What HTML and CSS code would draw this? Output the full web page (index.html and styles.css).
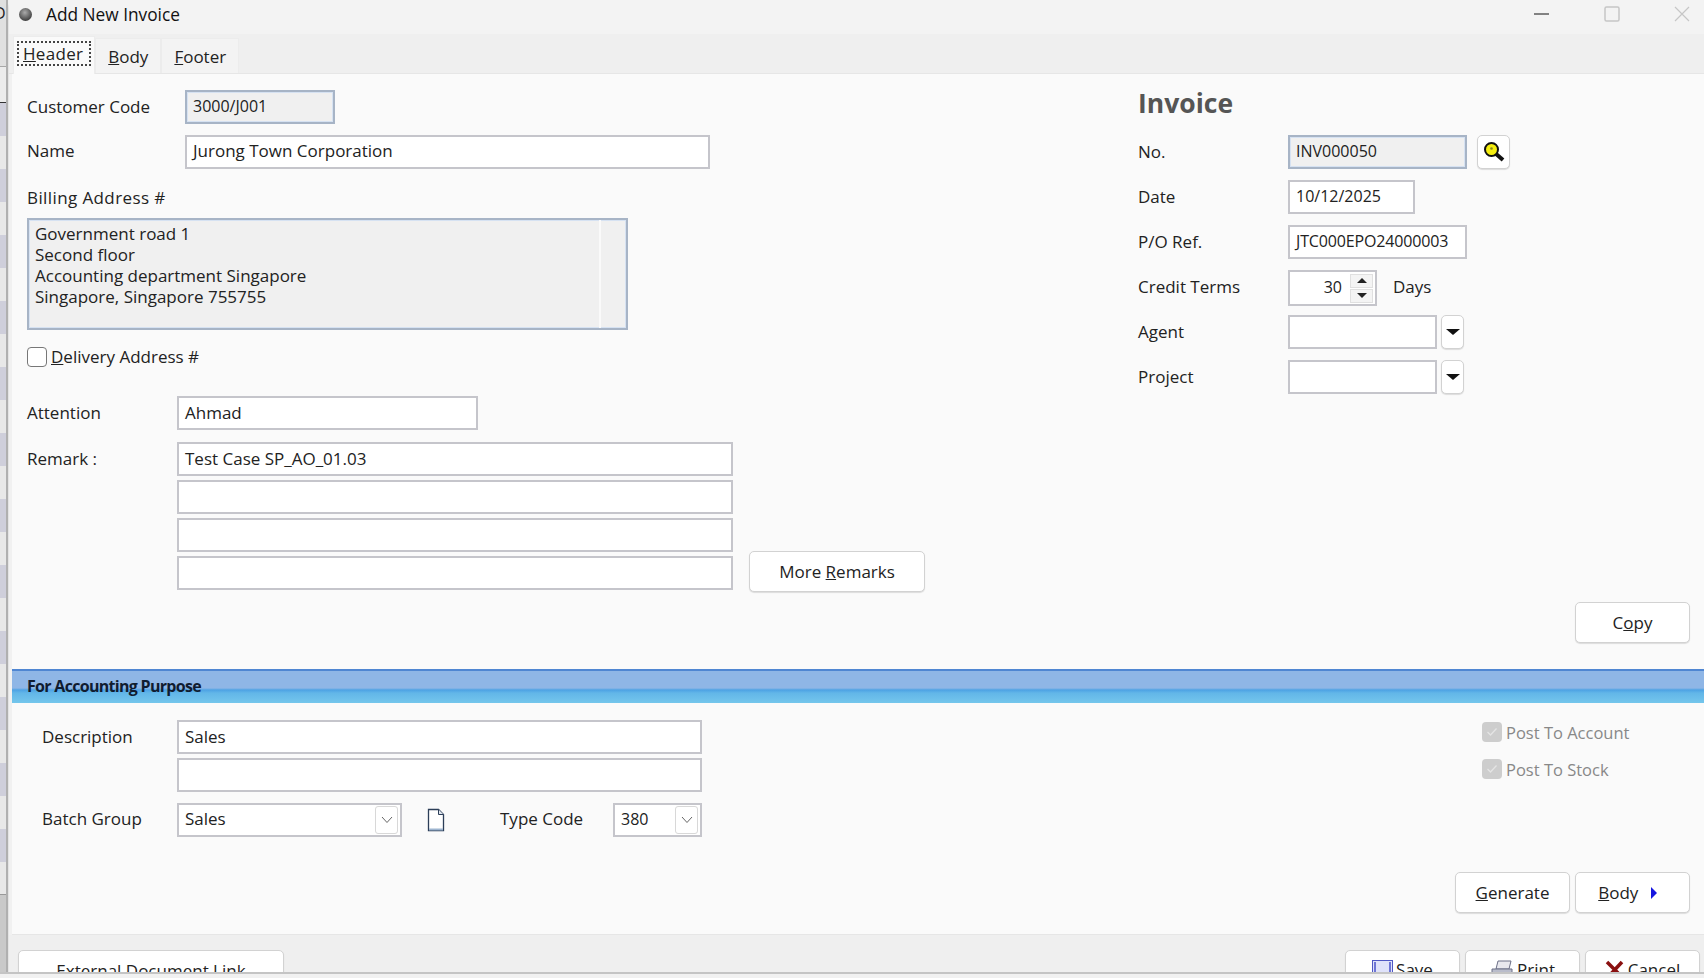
FILE: index.html

```html
<!DOCTYPE html>
<html lang="en">
<head>
    <meta charset="UTF-8">
    <title>Add New Invoice</title>
    <link rel="stylesheet" href="styles.css">
</head>
<body>
<div class="screen">
    <div class="behind">
        <div class="behind-head"><span class="behind-letter">D</span></div>
        <div class="behind-rows"></div>
        <div class="behind-foot"></div>
    </div>
    <div class="window">
        <div class="titlebar">
            <span class="app-dot"></span>
            <span class="title">Add New Invoice</span>
            <div class="win-btns">
                <svg width="16" height="16" viewBox="0 0 16 16"><path d="M0 8h15" stroke="#111" stroke-width="1" fill="none"/></svg>
                <svg width="16" height="16" viewBox="0 0 16 16"><rect x="1" y="1" width="14" height="14" rx="1.5" stroke="#c6c6c6" stroke-width="1.5" fill="none"/></svg>
                <svg width="16" height="16" viewBox="0 0 16 16"><path d="M1 1l14 14M15 1L1 15" stroke="#c6c6c6" stroke-width="1.2" fill="none"/></svg>
            </div>
        </div>

        <div class="tabs">
            <div class="tab active"><span class="focus-box"><u>H</u>eader</span></div>
            <div class="tab"><u>B</u>ody</div>
            <div class="tab"><u>F</u>ooter</div>
        </div>

        <div class="panel">
            <div class="top-area">
                <div class="left-col">
                    <div class="row row-code">
                        <label class="lbl">Customer Code</label>
                        <div class="field readonly w-code code-text">3000/J001</div>
                    </div>
                    <div class="row row-name">
                        <label class="lbl">Name</label>
                        <div class="field w-name">Jurong Town Corporation</div>
                    </div>
                    <div class="billing-label">Billing Address #</div>
                    <div class="address">
                        <div class="address-text">Government road 1<br>Second floor<br>Accounting department Singapore<br>Singapore, Singapore 755755</div>
                        <div class="address-scroll"></div>
                    </div>
                    <div class="delivery">
                        <span class="check"></span>
                        <span class="delivery-text"><u>D</u>elivery Address #</span>
                    </div>
                    <div class="row row-attention">
                        <label class="lbl lbl-short">Attention</label>
                        <div class="field w-attention">Ahmad</div>
                    </div>
                    <div class="remarks">
                        <label class="lbl lbl-short">Remark :</label>
                        <div class="remark-lines">
                            <div class="field w-remark">Test Case SP_AO_01.03</div>
                            <div class="field w-remark"></div>
                            <div class="field w-remark"></div>
                            <div class="field w-remark"></div>
                        </div>
                        <button class="btn btn-more">More <u>R</u>emarks</button>
                    </div>
                </div>

                <div class="right-col">
                    <h2 class="doc-title">Invoice</h2>
                    <div class="row row-r">
                        <label class="lbl-r">No.</label>
                        <div class="field readonly w-doc code-text">INV000050</div>
                        <button class="btn btn-search">
                            <svg width="24" height="24" viewBox="0 0 24 24"><path d="M13 13l8 7" stroke="#111" stroke-width="4" fill="none"/><circle cx="9.5" cy="9.5" r="6.5" fill="#f5ee10" stroke="#111" stroke-width="2"/><circle cx="9.5" cy="8.5" r="1.3" fill="#8a8a20"/></svg>
                        </button>
                    </div>
                    <div class="row row-r">
                        <label class="lbl-r">Date</label>
                        <div class="field w-date code-text">10/12/2025</div>
                    </div>
                    <div class="row row-r">
                        <label class="lbl-r">P/O Ref.</label>
                        <div class="field w-doc code-text tight">JTC000EPO24000003</div>
                    </div>
                    <div class="row row-r row-terms">
                        <label class="lbl-r">Credit Terms</label>
                        <div class="field spin">
                            <span class="spin-val">30</span>
                            <span class="spin-btns">
                                <span class="spin-btn"><i class="tri-up"></i></span>
                                <span class="spin-btn"><i class="tri-down"></i></span>
                            </span>
                        </div>
                        <span class="days">Days</span>
                    </div>
                    <div class="row row-r row-agent">
                        <label class="lbl-r">Agent</label>
                        <div class="field w-agent"></div>
                        <button class="btn btn-drop"><i class="tri-down big"></i></button>
                    </div>
                    <div class="row row-r row-project">
                        <label class="lbl-r">Project</label>
                        <div class="field w-agent"></div>
                        <button class="btn btn-drop"><i class="tri-down big"></i></button>
                    </div>
                    <div class="copy-wrap">
                        <button class="btn btn-std">C<u>o</u>py</button>
                    </div>
                </div>
            </div>

            <div class="band">For Accounting Purpose</div>

            <div class="bottom-area">
                <div class="acc-left">
                    <div class="acc-row">
                        <label class="lbl-acc">Description</label>
                        <div class="field w-desc">Sales</div>
                    </div>
                    <div class="acc-row acc-row2">
                        <label class="lbl-acc"></label>
                        <div class="field w-desc"></div>
                    </div>
                    <div class="acc-row acc-row3">
                        <label class="lbl-acc">Batch Group</label>
                        <div class="field combo w-batch">
                            <span>Sales</span>
                            <span class="combo-btn"><svg width="12" height="8" viewBox="0 0 12 8"><path d="M1 1l5 5.5L11 1" stroke="#666" stroke-width="1" fill="none"/></svg></span>
                        </div>
                        <svg class="doc-icon" width="20" height="24" viewBox="0 0 20 24"><path d="M2.5 1.500h10l5 5v16h-15z" fill="#fff" stroke="#2c3e58" stroke-width="1.300"/><path d="M12.500 1.500v5h5" fill="#dfe6ef" stroke="#2c3e58" stroke-width="1"/><path d="M3 21.500h14" stroke="#9db4cf" stroke-width="2"/></svg>
                        <label class="lbl-type">Type Code</label>
                        <div class="field combo w-type code-text">
                            <span>380</span>
                            <span class="combo-btn"><svg width="12" height="8" viewBox="0 0 12 8"><path d="M1 1l5 5.5L11 1" stroke="#666" stroke-width="1" fill="none"/></svg></span>
                        </div>
                    </div>
                </div>
                <div class="acc-right">
                    <div class="posts">
                        <div class="post"><span class="check-off"><svg width="12" height="10" viewBox="0 0 12 10"><path d="M1.500 5l3 3 6-6.500" stroke="#e4e4e4" stroke-width="1.300" fill="none"/></svg></span>Post To Account</div>
                        <div class="post"><span class="check-off"><svg width="12" height="10" viewBox="0 0 12 10"><path d="M1.500 5l3 3 6-6.500" stroke="#e4e4e4" stroke-width="1.300" fill="none"/></svg></span>Post To Stock</div>
                    </div>
                    <div class="acc-btns">
                        <button class="btn btn-std"><u>G</u>enerate</button>
                        <button class="btn btn-std btn-next"><u>B</u>ody <i class="tri-right"></i></button>
                    </div>
                </div>
            </div>
        </div>

        <div class="footer">
            <button class="btn btn-ext">External Document Link</button>
            <div class="footer-right">
                <button class="btn btn-foot">
                    <svg width="21" height="20" viewBox="0 0 21 20"><rect x="0.500" y="0.500" width="20" height="19" fill="#dfe2fa" stroke="#5058c4"/><path d="M2 2h2v11h13V2h2v16H2z" fill="#6f76d6"/></svg>
                    <span>Save</span>
                </button>
                <button class="btn btn-foot">
                    <svg width="24" height="20" viewBox="0 0 24 20"><path d="M8 1h13l-2 8H6z" fill="#e8e8ee" stroke="#6d7088"/><path d="M2 9h20v9H2z" fill="#b9bccb" stroke="#6d7088"/></svg>
                    <span>Print</span>
                </button>
                <button class="btn btn-foot">
                    <svg width="20" height="20" viewBox="0 0 20 20"><path d="M2 2l15 15M17 2L3 17" stroke="#8a1010" stroke-width="3.500" fill="none"/></svg>
                    <span>Cancel</span>
                </button>
            </div>
        </div>
    </div>
</div>
<div class="statusline"></div>
</body>
</html>
```

FILE: styles.css

```css
* {
    box-sizing: border-box;
}

html, body {
    margin: 0;
    padding: 0;
}

body {
    width: 1704px;
    height: 978px;
    overflow: hidden;
    background-color: #f1f1f1;
    font-family: "Open Sans", "Noto Sans", Arial, sans-serif;
    font-size: 17px;
    color: #222;
}

.screen {
    display: flex;
    height: 974px;
    overflow: hidden;
    border-bottom: 2px solid #c4c4c4;
}

/* the window underneath, only a sliver shows */
.behind {
    width: 8px;
    flex-shrink: 0;
    display: flex;
    flex-direction: column;
    overflow: hidden;
    border-right: 2px solid #b0b0b0;
}

.behind-head {
    height: 103px;
    flex-shrink: 0;
    overflow: hidden;
    background: linear-gradient(#e0e0e0 0, #e0e0e0 66px, #a8a8a8 66px, #a8a8a8 67px, #ececec 67px, #ececec 102px, #333 102px);
}

.behind-letter {
    display: block;
    margin-left: -6px;
    margin-top: 2px;
    font-size: 16px;
}

.behind-rows {
    flex: 1;
    background: repeating-linear-gradient(#cfcfdb 0, #cfcfdb 33px, #e8e8e8 33px, #e8e8e8 66px);
}

.behind-foot {
    height: 78px;
    flex-shrink: 0;
    background-color: #c9c9c9;
    border-top: 1px solid #999;
}

.window {
    flex: 1;
    display: flex;
    flex-direction: column;
    min-width: 0;
    background-color: #f1f1f1;
    border-left: 1px solid #e4e4e4;
    border-top-left-radius: 8px;
}

.titlebar {
    height: 34px;
    flex-shrink: 0;
    display: flex;
    align-items: center;
    padding-left: 10px;
    padding-bottom: 6px;
    background-color: #f3f3f3;
}

.app-dot {
    width: 13px;
    height: 13px;
    border-radius: 50%;
    background: radial-gradient(circle at 45% 35%, #aaa, #3f3f3f 75%);
}

.title {
    margin-left: 14px;
    font-size: 17.300px;
    color: #111;
}

.win-btns {
    margin-left: auto;
    display: flex;
    gap: 54px;
    padding-right: 14px;
}

.tabs {
    height: 40px;
    flex-shrink: 0;
    display: flex;
    align-items: flex-end;
    padding-left: 4px;
    background-color: #efefef;
    border-bottom: 1px solid #e6e6e6;
}

.tab {
    height: 35px;
    padding: 0 12px;
    display: flex;
    align-items: center;
    background-color: #f3f3f3;
    border: 1px solid #ececec;
    border-bottom: none;
}

.tab.active {
    height: 38px;
    padding: 0 4px;
    background-color: #fafafa;
    margin-bottom: -1px;
    padding-bottom: 4px;
}

.focus-box {
    padding: 0 7px 0 5px;
    line-height: 23px;
    letter-spacing: 0.3px;
    outline: 2px dotted #444;
    outline-offset: -1px;
}

.panel {
    flex: 1;
    min-height: 0;
    margin-left: 3px;
    display: flex;
    flex-direction: column;
    background-color: #fafafa;
    border-bottom: 1px solid #e6e6e6;
}

.top-area {
    height: 595px;
    flex-shrink: 0;
    display: flex;
}

.left-col {
    width: 1126px;
    flex-shrink: 0;
    padding: 16px 0 0 15px;
}

.right-col {
    flex: 1;
    display: flex;
    flex-direction: column;
    padding-right: 14px;
}

.row {
    display: flex;
    align-items: center;
}

.lbl {
    width: 158px;
    flex-shrink: 0;
    padding-bottom: 1px;
}

.lbl-short {
    width: 150px;
}

.field {
    height: 34px;
    padding: 0 6px 2px;
    display: flex;
    align-items: center;
    flex-shrink: 0;
    background-color: #fff;
    border: 2px solid #c5c5cb;
    white-space: nowrap;
}

.readonly {
    background-color: #f0f0f0;
    border-color: #a7b4c6;
    box-shadow: inset 0 0 0 1px #d6e2f2;
}

/* codes and dates come out too wide at the body size */
.code-text {
    font-size: 16px;
}

.tight {
    letter-spacing: -0.15px;
}

.w-code { width: 150px; }
.w-name { width: 525px; }
.w-attention { width: 301px; }
.w-remark { width: 556px; }
.w-doc { width: 179px; }
.w-date { width: 127px; }
.w-agent { width: 149px; }
.w-desc { width: 525px; }
.w-batch { width: 225px; }
.w-type { width: 89px; }

.row-name {
    margin-top: 11px;
}

.row-name .lbl {
    padding-bottom: 3px;
}

.row-name .field {
    padding-bottom: 4px;
}

.billing-label {
    margin-top: 18px;
    line-height: 22px;
    letter-spacing: 0.4px;
}

.address {
    margin-top: 9px;
    width: 601px;
    height: 112px;
    display: flex;
    background-color: #f0f0f0;
    border: 2px solid #a7b4c6;
    box-shadow: inset 0 0 0 1px #d6e2f2;
}

.address-text {
    flex: 1;
    padding: 3px 6px;
    line-height: 21px;
}

.address-scroll {
    width: 27px;
    border-left: 2px solid #fafafa;
}

.delivery {
    margin-top: 17px;
    display: flex;
    align-items: center;
    gap: 4px;
    height: 20px;
}

.delivery-text {
    padding-bottom: 2px;
}

.check {
    width: 20px;
    height: 20px;
    background-color: #fff;
    border: 1.500px solid #777;
    border-radius: 4px;
}

.row-attention {
    margin-top: 29px;
}

.remarks {
    margin-top: 12px;
    display: flex;
    align-items: flex-start;
}

.remarks .lbl {
    line-height: 33px;
}

.remark-lines {
    display: flex;
    flex-direction: column;
    gap: 4px;
}

.btn {
    font-family: inherit;
    font-size: 17px;
    color: #222;
    background-color: #fff;
    border: 1px solid #d2d2d2;
    border-radius: 5px;
    box-shadow: 0 1px 1px rgba(0, 0, 0, 0.12);
    padding: 0;
    cursor: pointer;
}

.btn-more {
    width: 176px;
    height: 41px;
    margin-left: 16px;
    margin-top: 109px;
}

.doc-title {
    margin: 11px 0 14px;
    font-size: 26.500px;
    font-weight: 700;
    line-height: 36px;
    color: #555;
}

.row-r {
    margin-bottom: 11px;
}

.lbl-r {
    width: 150px;
    flex-shrink: 0;
    padding-bottom: 2px;
}

.btn-search {
    width: 33px;
    height: 34px;
    margin-left: 10px;
    display: flex;
    align-items: center;
    justify-content: center;
}

.spin {
    width: 89px;
    height: 36px;
    padding: 0 2px 0 0;
    justify-content: flex-end;
}

.spin-val {
    margin-right: 8px;
    font-size: 16px;
    padding-bottom: 2px;
}

.spin-btns {
    width: 23px;
    display: flex;
    flex-direction: column;
    gap: 1px;
}

.spin-btn {
    height: 14px;
    display: flex;
    align-items: center;
    justify-content: center;
    background-color: #f4f4f4;
    border: 1px solid #e0e0e0;
}

.tri-up, .tri-down, .tri-right {
    display: inline-block;
    width: 0;
    height: 0;
}

.tri-up {
    border-left: 5px solid transparent;
    border-right: 5px solid transparent;
    border-bottom: 5px solid #222;
}

.tri-down {
    border-left: 5px solid transparent;
    border-right: 5px solid transparent;
    border-top: 5px solid #222;
}

.tri-down.big {
    border-left-width: 7px;
    border-right-width: 7px;
    border-top-width: 6px;
    border-top-color: #111;
}

.tri-right {
    margin-left: 8px;
    border-top: 6px solid transparent;
    border-bottom: 6px solid transparent;
    border-left: 6px solid #1616e0;
}

.days {
    margin-left: 16px;
    padding-bottom: 4px;
}

.row-terms {
    margin-bottom: 9px;
}

.row-terms .lbl-r {
    padding-bottom: 4px;
}

.btn-drop {
    width: 23px;
    height: 34px;
    margin-left: 4px;
    display: flex;
    align-items: center;
    justify-content: center;
}

.copy-wrap {
    margin-top: auto;
    margin-bottom: 26px;
    display: flex;
    justify-content: flex-end;
}

.btn-std {
    width: 115px;
    height: 41px;
}

.btn-next {
    padding-right: 10px;
}

.band {
    height: 34px;
    flex-shrink: 0;
    padding: 0 15px 3px;
    display: flex;
    align-items: center;
    font-weight: 700;
    font-size: 16px;
    color: #101c30;
    letter-spacing: -0.7px;
    background: linear-gradient(#8fb6e6 0, #8fb6e6 17px, #4da2e4 19px, #62b6e8 22px, #74c6ec 100%);
    border-top: 2px solid #4f86d2;
}

.bottom-area {
    flex: 1;
    display: flex;
    justify-content: space-between;
    padding: 17px 14px 21px 30px;
}

.acc-row {
    display: flex;
    align-items: center;
}

.lbl-acc {
    width: 135px;
    flex-shrink: 0;
    padding-bottom: 1px;
}

.acc-row2 {
    margin-top: 4px;
}

.acc-row3 {
    margin-top: 11px;
}

.acc-row3 .lbl-acc, .lbl-type {
    padding-bottom: 3px;
}

.combo {
    justify-content: space-between;
    padding-right: 2px;
    padding-bottom: 0;
}

.combo > span:first-child {
    padding-bottom: 3px;
}

.combo-btn {
    width: 23px;
    height: 28px;
    display: flex;
    align-items: center;
    justify-content: center;
    background-color: #fff;
    border: 1px solid #d8d8d8;
    border-radius: 3px;
}

.doc-icon {
    margin-left: 24px;
    flex-shrink: 0;
}

.lbl-type {
    margin-left: 54px;
    width: 113px;
    flex-shrink: 0;
}

.acc-right {
    display: flex;
    flex-direction: column;
    align-items: flex-end;
    justify-content: space-between;
}

.posts {
    width: 208px;
    margin-top: 2px;
    display: flex;
    flex-direction: column;
    gap: 17px;
}

.post {
    display: flex;
    align-items: center;
    gap: 4px;
    height: 20px;
    font-size: 16.500px;
    color: #888;
}

.check-off {
    width: 20px;
    height: 20px;
    display: flex;
    align-items: center;
    justify-content: center;
    background-color: #cdcdcd;
    border-radius: 4px;
}

.acc-btns {
    display: flex;
    gap: 5px;
}

.footer {
    height: 37px;
    flex-shrink: 0;
    padding: 15px 4px 0 9px;
    display: flex;
    justify-content: space-between;
    overflow: hidden;
    background-color: #efefef;
}

.btn-ext {
    width: 266px;
    height: 41px;
}

.footer-right {
    display: flex;
    gap: 5px;
}

.btn-foot {
    width: 115px;
    height: 41px;
    display: flex;
    align-items: flex-start;
    justify-content: center;
    gap: 3px;
    padding-top: 9px;
    line-height: 20px;
}

.statusline {
    height: 4px;
    background-color: #f1f1f1;
}
```
